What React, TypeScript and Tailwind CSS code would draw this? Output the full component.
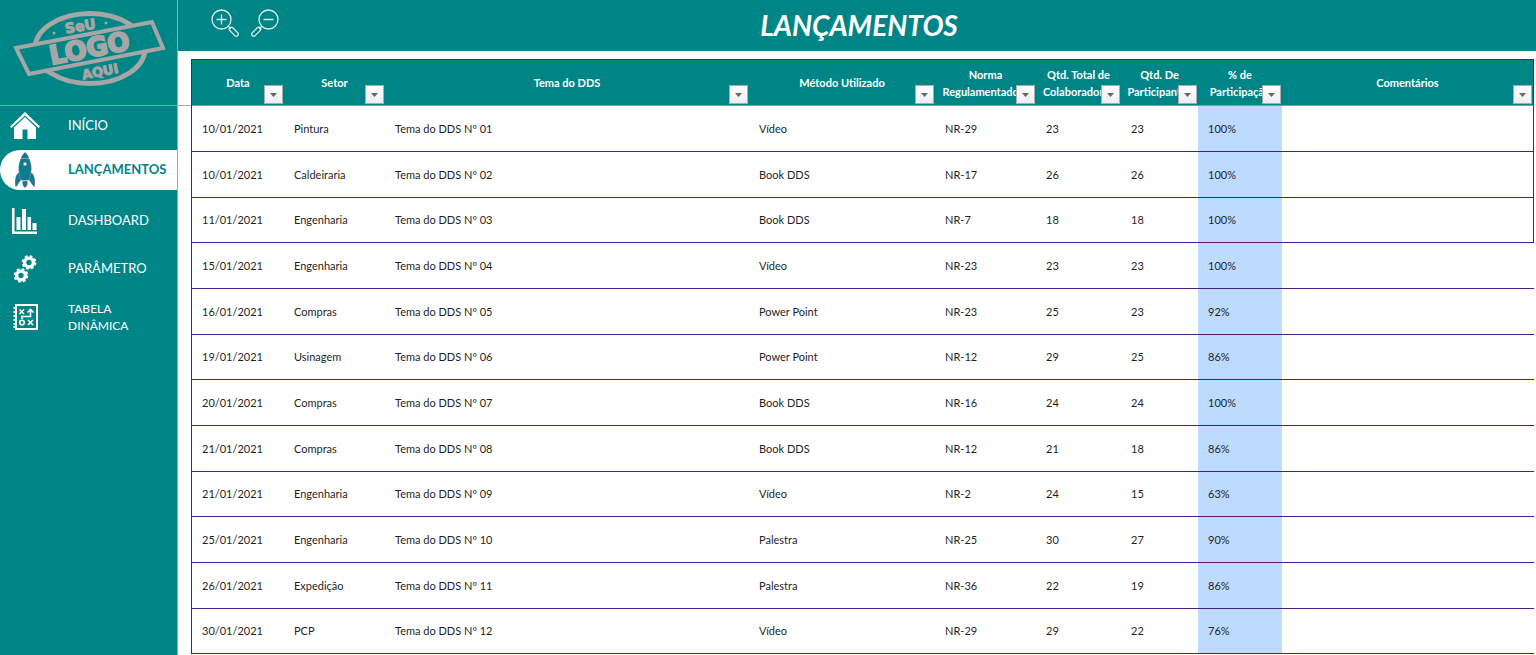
import type { ReactNode } from "react";

type Entry = {
  date: string;
  sector: string;
  topic: string;
  method: string;
  norm: string;
  total: number;
  present: number;
  rate: string;
};

const entries: Entry[] = [
  { date: "10/01/2021", sector: "Pintura", topic: "Tema do DDS Nº 01", method: "Vídeo", norm: "NR-29", total: 23, present: 23, rate: "100%" },
  { date: "10/01/2021", sector: "Caldeiraria", topic: "Tema do DDS Nº 02", method: "Book DDS", norm: "NR-17", total: 26, present: 26, rate: "100%" },
  { date: "11/01/2021", sector: "Engenharia", topic: "Tema do DDS Nº 03", method: "Book DDS", norm: "NR-7", total: 18, present: 18, rate: "100%" },
  { date: "15/01/2021", sector: "Engenharia", topic: "Tema do DDS Nº 04", method: "Vídeo", norm: "NR-23", total: 23, present: 23, rate: "100%" },
  { date: "16/01/2021", sector: "Compras", topic: "Tema do DDS Nº 05", method: "Power Point", norm: "NR-23", total: 25, present: 23, rate: "92%" },
  { date: "19/01/2021", sector: "Usinagem", topic: "Tema do DDS Nº 06", method: "Power Point", norm: "NR-12", total: 29, present: 25, rate: "86%" },
  { date: "20/01/2021", sector: "Compras", topic: "Tema do DDS Nº 07", method: "Book DDS", norm: "NR-16", total: 24, present: 24, rate: "100%" },
  { date: "21/01/2021", sector: "Compras", topic: "Tema do DDS Nº 08", method: "Book DDS", norm: "NR-12", total: 21, present: 18, rate: "86%" },
  { date: "21/01/2021", sector: "Engenharia", topic: "Tema do DDS Nº 09", method: "Vídeo", norm: "NR-2", total: 24, present: 15, rate: "63%" },
  { date: "25/01/2021", sector: "Engenharia", topic: "Tema do DDS Nº 10", method: "Palestra", norm: "NR-25", total: 30, present: 27, rate: "90%" },
  { date: "26/01/2021", sector: "Expedição", topic: "Tema do DDS Nº 11", method: "Palestra", norm: "NR-36", total: 22, present: 19, rate: "86%" },
  { date: "30/01/2021", sector: "PCP", topic: "Tema do DDS Nº 12", method: "Vídeo", norm: "NR-29", total: 29, present: 22, rate: "76%" },
];

const columns = [
  { lines: ["Data"], width: "w-[92px]" },
  { lines: ["Setor"], width: "w-[101px]" },
  { lines: ["Tema do DDS"], width: "w-[364px]" },
  { lines: ["Método Utilizado"], width: "w-[186px]" },
  { lines: ["Norma", "Regulamentadora"], width: "w-[101px]" },
  { lines: ["Qtd. Total de", "Colaboradores"], width: "w-[85px]" },
  { lines: ["Qtd. De", "Participantes"], width: "w-[77px]" },
  { lines: ["% de", "Participação"], width: "w-[84px]" },
  { lines: ["Comentários"], width: "" },
];

function Logo() {
  return (
    <svg viewBox="0 0 178 105" className="h-[105px] w-[178px]" role="img" aria-label="Seu logo aqui">
      <ellipse cx="90" cy="48.5" rx="55" ry="35" fill="none" stroke="#a6a6a6" strokeWidth="5" />
      <path d="M16 48 L152 22 L163 48 L29 74 Z" fill="#008587" stroke="#a6a6a6" strokeWidth="4" />
      <g fill="#a6a6a6" stroke="#a6a6a6" textAnchor="middle" className="font-['DejaVu_Sans',sans-serif] font-bold">
        <text transform="translate(81 31) rotate(-9)" fontSize="14" strokeWidth="1">SeU</text>
        <text transform="translate(91 57) rotate(-11)" fontSize="26" strokeWidth="2">LOGO</text>
        <text transform="translate(101 76) rotate(-11)" fontSize="13" strokeWidth="1">AQUI</text>
      </g>
      <circle cx="54" cy="33" r="1.5" fill="#a6a6a6" />
      <circle cx="106" cy="23" r="1.5" fill="#a6a6a6" />
    </svg>
  );
}

function HomeIcon() {
  return (
    <svg viewBox="0 0 30 28" className="h-7 w-[30px]" fill="#fff">
      <path d="M15 0 L30 14.5 L28.5 16 L15 3.5 L1.5 16 L0 14.5 Z" />
      <path d="M15 5 L26 15.5 V27 H17.5 V17.5 H12.5 V27 H4 V15.5 Z" />
    </svg>
  );
}

function RocketIcon() {
  return (
    <svg viewBox="0 0 20 36" className="h-9 w-5" fill="#0a7f8c" stroke="#3f5f9a" strokeWidth="0.8">
      <path d="M10 0.5 C11.5 2 13 4 13.5 6 H6.5 C7 4 8.5 2 10 0.5 Z" />
      <path d="M6 7 H14 C17 14 16.5 21 13.5 28 H6.5 C3.5 21 3 14 6 7 Z" />
      <path d="M3.5 21 L5.5 28 L1 34.5 C0 29 0.5 24 3.5 21 Z" />
      <path d="M16.5 21 L14.5 28 L19 34.5 C20 29 19.5 24 16.5 21 Z" />
      <path d="M8 29.5 H12 C12.5 32 11.5 34 10 35.5 C8.5 34 7.5 32 8 29.5 Z" />
      <circle cx="10" cy="12" r="2" fill="#fff" />
    </svg>
  );
}

function ChartIcon() {
  return (
    <svg viewBox="0 0 26 26" className="size-[26px]" fill="#fff">
      <path d="M0 0 H2.5 V23.5 H25 V26 H0 Z" />
      <path d="M4.5 9 H8.5 V22 H4.5 Z M10 1 H14 V22 H10 Z M15.5 9 H19 V22 H15.5 Z M20.5 15 H24.5 V22 H20.5 Z" />
    </svg>
  );
}

function Gear({ x, y }: { x: number; y: number }) {
  return (
    <g transform={`translate(${x} ${y})`} fill="none" stroke="#fff">
      <circle r="4.4" strokeWidth="3.4" />
      {/* eight teeth: the dash period is an eighth of the circumference */}
      <circle r="6.37" strokeWidth="2" strokeDasharray="2.7 2.3" />
    </g>
  );
}

function GearsIcon() {
  return (
    <svg viewBox="0 0 24 28" className="h-7 w-6">
      <Gear x={16} y={7.5} />
      <Gear x={8} y={20.5} />
    </svg>
  );
}

function PlaybookIcon() {
  return (
    <svg viewBox="0 0 25 26" className="h-[26px] w-[25px]" fill="none" stroke="#fff" strokeWidth="1.6">
      <rect x="3" y="1" width="21" height="24" strokeWidth="2" />
      <path d="M0.5 4 H4 M0.5 8 H4 M0.5 12 H4 M0.5 16 H4 M0.5 20 H4 M0.5 23 H4" strokeWidth="2" />
      <path d="M6.5 5.5 L11 10 M11 5.5 L6.5 10 M15 16 L20 21 M20 16 L15 21" />
      <path d="M9 15 V12.5 H17.5 V6 M14.5 8.5 L17.5 5.5 L20.5 8.5" />
      <circle cx="9" cy="18.5" r="2.3" />
    </svg>
  );
}

function Magnifier({ minus = false }: { minus?: boolean }) {
  return (
    <svg viewBox="0 0 28 28" className="size-7" fill="none" stroke="#d5ecec" strokeWidth="1.3" strokeLinecap="round">
      {/* the zoom-out glass is the same shape facing the other way */}
      <g transform={minus ? "translate(28 0) scale(-1 1)" : undefined}>
        <circle cx="10.5" cy="10.5" r="9.5" />
        <path d="M17.5 17.5 L19.5 19.5" />
        <rect x="17.3" y="20.7" width="11" height="4" rx="2" transform="rotate(45 22.8 22.7)" />
        <path d={minus ? "M6 10.5 H15" : "M6 10.5 H15 M10.5 6 V15"} />
      </g>
    </svg>
  );
}

function NavItem({ icon, children, active = false, className = "" }: { icon: ReactNode; children: ReactNode; active?: boolean; className?: string }) {
  return (
    <a
      href="#"
      aria-current={active ? "page" : undefined}
      className={`flex h-10 items-center text-[13px] ${active ? "rounded-l-full bg-white font-bold text-[#008587]" : "text-white"} ${className}`}
    >
      <span className="flex w-[50px] shrink-0 justify-center">{icon}</span>
      <span className="pl-[18px]">{children}</span>
    </a>
  );
}

function FilterButton({ label }: { label: string }) {
  return (
    <button
      type="button"
      aria-label={`Filtrar ${label}`}
      className="absolute right-px bottom-px flex size-[19px] items-center justify-center border border-[#a9adb3] bg-linear-to-b from-white to-[#eceef2]"
    >
      <svg viewBox="0 0 7 4" className="h-1 w-[7px]" fill="#666">
        <path d="M0 0 H7 L3.5 4 Z" />
      </svg>
    </button>
  );
}

export default function App() {
  return (
    <div className="flex min-h-screen bg-white font-[Lato,sans-serif] text-[#1f1f1f]">
      <aside className="w-[178px] shrink-0 border-r border-[#a6a6a6] bg-[#008587]">
        <div className="border-b border-[#8f9a9a]">
          <Logo />
        </div>
        <nav className="flex flex-col">
          <NavItem icon={<HomeIcon />}>INÍCIO</NavItem>
          <NavItem icon={<RocketIcon />} active className="mt-1">LANÇAMENTOS</NavItem>
          <NavItem icon={<ChartIcon />} className="mt-[11px]">DASHBOARD</NavItem>
          <NavItem icon={<GearsIcon />} className="mt-2">PARÂMETRO</NavItem>
          <NavItem icon={<PlaybookIcon />} className="mt-2">
            <span className="block text-xs leading-[17px]">TABELA<br />DINÂMICA</span>
          </NavItem>
        </nav>
      </aside>

      <main className="min-w-0 flex-1">
        <header className="grid h-[51px] grid-cols-[1fr_auto_1fr] items-center bg-[#008587] pb-0.5 pl-1">
          <div className="flex gap-3 pb-1 pl-[29px]">
            <button type="button" aria-label="Aumentar zoom"><Magnifier /></button>
            <button type="button" aria-label="Diminuir zoom"><Magnifier minus /></button>
          </div>
          <h1 className="text-[28px] font-bold text-white italic">LANÇAMENTOS</h1>
        </header>

        <div className="flex">
          <div className="h-[55px] w-[13px] shrink-0 border-b border-[#a6a6a6]" />
          <div className="min-w-0 flex-1 pt-2 pr-0.5">
            <table className="w-full table-fixed border-separate border-spacing-0 border-l border-[#4b1e87] text-left text-[11px]">
              <colgroup>
                {columns.map((col) => (
                  <col key={col.lines.join(" ")} className={col.width} />
                ))}
              </colgroup>
              <thead>
                <tr className="h-[47px] bg-[#008587] text-white">
                  {columns.map((col) => (
                    <th
                      key={col.lines.join(" ")}
                      scope="col"
                      className="relative overflow-hidden border-t border-b border-t-[#4b1e87] border-b-[#8f9a9a] p-0 text-center leading-[17px] font-bold whitespace-nowrap last:border-r last:border-r-[#4b1e87]"
                    >
                      {col.lines.map((line) => (
                        <span key={line} className="flex justify-center">{line}</span>
                      ))}
                      <FilterButton label={col.lines.join(" ")} />
                    </th>
                  ))}
                </tr>
              </thead>
              <tbody>
                {entries.map((entry, idx) => (
                  <tr
                    key={entry.topic}
                    className="h-[46px] nth-[3n]:h-[45px] [&>td]:border-b [&>td]:border-[#4b1e87] [&>td]:pt-px [&>td]:pb-0 [&>td]:pl-2.5"
                  >
                    <td>{entry.date}</td>
                    <td>{entry.sector}</td>
                    <td>{entry.topic}</td>
                    <td>{entry.method}</td>
                    <td>{entry.norm}</td>
                    <td>{entry.total}</td>
                    <td>{entry.present}</td>
                    <td className="bg-[#bddaff]">{entry.rate}</td>
                    <td className={idx < 3 ? "border-r" : ""} />
                  </tr>
                ))}
              </tbody>
            </table>
          </div>
        </div>
      </main>
    </div>
  );
}
